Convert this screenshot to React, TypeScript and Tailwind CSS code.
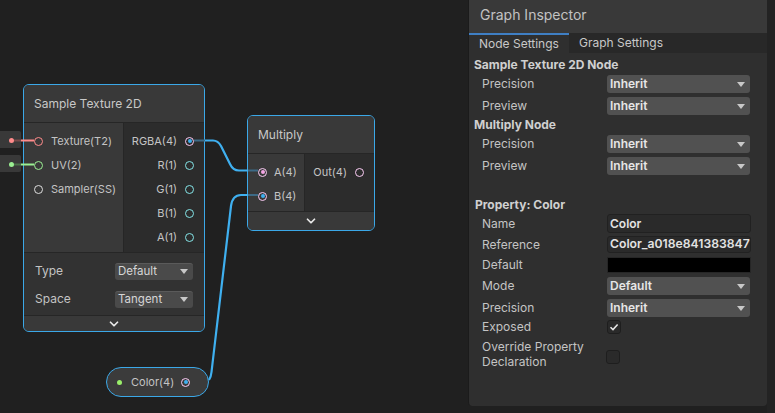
import { ChevronDown } from 'lucide-react';

function Port({ ring, dot }: { ring: string; dot?: string }) {
  return (
    <div className={`relative z-20 flex h-[9px] w-[9px] shrink-0 items-center justify-center rounded-full border-[1.5px] ${ring}`}>
      {dot && <div className={`h-[4px] w-[4px] rounded-full ${dot}`} />}
    </div>
  );
}

function Arrow() {
  return <div className="h-0 w-0 border-x-[4px] border-t-[5px] border-x-transparent border-t-[#c8c8c8]" />;
}

function NodeSelect({ value }: { value: string }) {
  return (
    <div className="flex h-[17px] w-[78px] items-center justify-between rounded-[3px] border-t border-[#5a5a5a] bg-[#4a4a4a] pl-[3px] pr-[5px] text-[11.5px] text-[#d6d6d6]">
      <span>{value}</span>
      <Arrow />
    </div>
  );
}

function InRow({ label, ring }: { label: string; ring: string }) {
  return (
    <div className="flex h-[24px] items-center pl-[10px]">
      <Port ring={ring} />
      <span className="ml-[8px] text-[11px] text-[#c4c4c4]">{label}</span>
    </div>
  );
}

function OutRow({ label, ring, dot }: { label: string; ring: string; dot?: string }) {
  return (
    <div className="flex h-[24px] items-center justify-end pr-[10px]">
      <span className="mr-[8px] text-[11px] text-[#c4c4c4]">{label}</span>
      <Port ring={ring} dot={dot} />
    </div>
  );
}

function SampleTextureNode() {
  return (
    <div className="absolute left-[23px] top-[84px] flex h-[248px] w-[182px] flex-col overflow-hidden rounded-[6px] border border-[#3ba8e8] bg-[#2c2c2c]">
      <div className="flex h-[38px] shrink-0 items-center border-b border-[#262626] bg-[#393939] pl-[10px] text-[12px] text-[#c8c8c8]">
        Sample Texture 2D
      </div>
      <div className="flex h-[129px] shrink-0">
        <div className="w-[100px] border-r border-[#262626] bg-[#393939] pt-[6px]">
          <InRow label="Texture(T2)" ring="border-[#ff8b8b]" />
          <InRow label="UV(2)" ring="border-[#9aef92]" />
          <InRow label="Sampler(SS)" ring="border-[#dedede]" />
        </div>
        <div className="flex-1 bg-[#2c2c2c] pt-[6px]">
          <OutRow label="RGBA(4)" ring="border-[#fbcbf4]" dot="bg-[#3fb0f0]" />
          <OutRow label="R(1)" ring="border-[#84e4e7]" />
          <OutRow label="G(1)" ring="border-[#84e4e7]" />
          <OutRow label="B(1)" ring="border-[#84e4e7]" />
          <OutRow label="A(1)" ring="border-[#84e4e7]" />
        </div>
      </div>
      <div className="flex h-[63px] shrink-0 flex-col gap-[10px] border-t border-[#262626] bg-[#323232] pl-[11px] pt-[9px]">
        <div className="flex items-center">
          <span className="w-[80px] text-[12px] text-[#c4c4c4]">Type</span>
          <NodeSelect value="Default" />
        </div>
        <div className="flex items-center">
          <span className="w-[80px] text-[12px] text-[#c4c4c4]">Space</span>
          <NodeSelect value="Tangent" />
        </div>
      </div>
      <div className="flex flex-1 items-center justify-center border-t border-[#262626] bg-[#393939]">
        <ChevronDown size={14} strokeWidth={3} className="text-[#e8e8e8]" />
      </div>
    </div>
  );
}

function MultiplyNode() {
  return (
    <div className="absolute left-[247px] top-[115px] flex h-[116px] w-[128px] flex-col overflow-hidden rounded-[6px] border border-[#3ba8e8] bg-[#2c2c2c]">
      <div className="flex h-[38px] shrink-0 items-center border-b border-[#262626] bg-[#393939] pl-[10px] text-[12px] text-[#c8c8c8]">
        Multiply
      </div>
      <div className="flex h-[57px] shrink-0">
        <div className="w-[57px] border-r border-[#262626] bg-[#393939] pt-[6px]">
          <div className="flex h-[24px] items-center pl-[10px]">
            <Port ring="border-[#fbcbf4]" dot="bg-[#f4a6e4]" />
            <span className="ml-[7px] text-[11px] text-[#c4c4c4]">A(4)</span>
          </div>
          <div className="flex h-[24px] items-center pl-[10px]">
            <Port ring="border-[#fbcbf4]" dot="bg-[#3fb0f0]" />
            <span className="ml-[7px] text-[11px] text-[#c4c4c4]">B(4)</span>
          </div>
        </div>
        <div className="flex-1 pt-[6px]">
          <OutRow label="Out(4)" ring="border-[#fbcbf4]" />
        </div>
      </div>
      <div className="flex flex-1 items-center justify-center border-t border-[#262626] bg-[#393939]">
        <ChevronDown size={14} strokeWidth={3} className="text-[#e8e8e8]" />
      </div>
    </div>
  );
}

function ColorNode() {
  return (
    <div className="absolute left-[106px] top-[367px] flex h-[30px] w-[103px] items-center rounded-full border border-[#3ba8e8] bg-[#3b3b3b] pl-[10px] pr-[18px]">
      <div className="h-[5px] w-[5px] rounded-full bg-[#9aef6a]" />
      <span className="ml-[9px] flex-1 text-[11px] text-[#c4c4c4]">Color(4)</span>
      <Port ring="border-[#fbcbf4]" dot="bg-[#3fb0f0]" />
    </div>
  );
}

function Wires() {
  return (
    <svg className="pointer-events-none absolute left-0 top-0 z-10" width="775" height="413" viewBox="0 0 775 413">
      <path d="M14 140.5 H21" stroke="#7a4b4b" strokeWidth="2" fill="none" />
      <path d="M21 140.5 H34" stroke="#ff8b8b" strokeWidth="2" fill="none" />
      <path d="M14 164.5 H21" stroke="#4d704b" strokeWidth="2" fill="none" />
      <path d="M21 164.5 H34" stroke="#9aef92" strokeWidth="2" fill="none" />
      <path d="M194 140.5 H205" stroke="#3d6a86" strokeWidth="2" fill="none" />
      <path d="M205 140.5 H213 Q218 140.5 221 146 L230 164 Q233 170.5 239 170.5 H248" stroke="#3fb0f0" strokeWidth="2.2" fill="none" />
      <path d="M248 170.5 H258" stroke="#3d6a86" strokeWidth="2" fill="none" />
      <path d="M209 380 Q211 377 211.5 372 L231 206 Q232.5 195 241 195 H248" stroke="#3fb0f0" strokeWidth="2.2" fill="none" />
      <path d="M248 195 H258" stroke="#3d6a86" strokeWidth="2" fill="none" />
    </svg>
  );
}

function Select({ value }: { value: string }) {
  return (
    <div className="flex h-[18px] w-[143px] items-center justify-between rounded-[3px] bg-[#515151] pl-[3px] pr-[5px] text-[12px] font-semibold text-[#e6e6e6]">
      <span>{value}</span>
      <Arrow />
    </div>
  );
}

function Field({ label, children, className = 'h-[18px]' }: { label: string; children: React.ReactNode; className?: string }) {
  return (
    <div className={`flex shrink-0 items-center pl-[13px] ${className}`}>
      <span className="w-[125px] text-[12px] text-[#c4c4c4]">{label}</span>
      {children}
    </div>
  );
}

function Checkbox({ checked }: { checked?: boolean }) {
  return (
    <div className="flex h-[14px] w-[14px] items-center justify-center rounded-[3px] border border-[#1e1e1e] bg-[#2a2a2a]">
      {checked && (
        <svg width="10" height="10" viewBox="0 0 10 10">
          <path d="M1.5 5.2 L4 7.6 L8.6 2.4" stroke="#e8e8e8" strokeWidth="1.5" fill="none" />
        </svg>
      )}
    </div>
  );
}

function Inspector() {
  return (
    <div className="absolute left-[468px] top-0 z-30 flex h-[406px] w-[299px] flex-col overflow-hidden rounded-b-[4px] border-l border-[#1b1b1b] bg-[#2f2f2f]">
      <div className="flex h-[33px] shrink-0 items-center bg-[#393939] pb-[5px] pl-[11px] text-[14px] text-[#c2c2c2]">
        Graph Inspector
      </div>
      <div className="flex h-[20px] shrink-0 bg-[#282828] text-[12px] text-[#c8c8c8]">
        <div className="flex w-[100px] items-center border-t-2 border-[#3f7fc4] bg-[#2f2f2f] pl-[10px]">Node Settings</div>
        <div className="flex items-center pl-[10px]">Graph Settings</div>
      </div>
      <div className="flex flex-col">
        <div className="mt-[3px] flex h-[18px] items-center pl-[5px] text-[12px] font-bold text-[#d0d0d0]">Sample Texture 2D Node</div>
        <Field label="Precision" className="mt-[1px] h-[18px]"><Select value="Inherit" /></Field>
        <Field label="Preview" className="mt-[4px] h-[18px]"><Select value="Inherit" /></Field>
        <div className="mt-[1px] flex h-[18px] items-center pl-[5px] text-[12px] font-bold text-[#d0d0d0]">Multiply Node</div>
        <Field label="Precision" className="mt-[1px] h-[18px]"><Select value="Inherit" /></Field>
        <Field label="Preview" className="mt-[4px] h-[18px]"><Select value="Inherit" /></Field>
        <div className="mt-[21px] flex h-[18px] items-center pl-[6px] text-[12px] font-bold text-[#d0d0d0]">Property: Color</div>
        <Field label="Name" className="h-[19px]">
          <div className="flex h-[19px] w-[144px] items-center rounded-[3px] border border-[#212121] bg-[#2a2a2a] pl-[2px] text-[12px] font-semibold text-[#e2e2e2]">Color</div>
        </Field>
        <Field label="Reference" className="mt-[3px] h-[17px]">
          <div className="flex h-[17px] w-[144px] items-center overflow-hidden whitespace-nowrap rounded-[3px] border border-[#212121] bg-[#2a2a2a] pl-[2px] text-[12.2px] font-semibold text-[#e2e2e2]">Color_a018e841383847</div>
        </Field>
        <Field label="Default" className="mt-[4px] h-[16px]">
          <div className="h-[16px] w-[144px] border border-[#262626] bg-black" />
        </Field>
        <Field label="Mode" className="mt-[4px] h-[18px]"><Select value="Default" /></Field>
        <Field label="Precision" className="mt-[4px] h-[18px]"><Select value="Inherit" /></Field>
        <Field label="Exposed" className="mt-[2px] h-[16px]"><Checkbox checked /></Field>
        <div className="mt-[3px] flex h-[31px] items-center pl-[13px]">
          <span className="w-[124px] text-[12px] leading-[15px] text-[#c4c4c4]">Override Property Declaration</span>
          <div className="mt-[7px]"><Checkbox /></div>
        </div>
      </div>
    </div>
  );
}

export default function App() {
  return (
    <div className="relative h-[413px] w-[775px] overflow-hidden bg-[#202020] font-['Inter',sans-serif]">
      <div className="absolute left-0 top-[131px] h-[17px] w-[21px] rounded-r-[2px] bg-[#393939]" />
      <div className="absolute left-0 top-[155px] h-[17px] w-[21px] rounded-r-[2px] bg-[#393939]" />
      <div className="absolute left-[9px] top-[138px] z-20 h-[5px] w-[5px] rounded-full bg-[#ff8b8b]" />
      <div className="absolute left-[9px] top-[162px] z-20 h-[5px] w-[5px] rounded-full bg-[#9aef92]" />
      <SampleTextureNode />
      <MultiplyNode />
      <ColorNode />
      <Wires />
      <div className="absolute right-0 top-0 h-[413px] w-[8px] bg-[#232323]" />
      <Inspector />
    </div>
  );
}
